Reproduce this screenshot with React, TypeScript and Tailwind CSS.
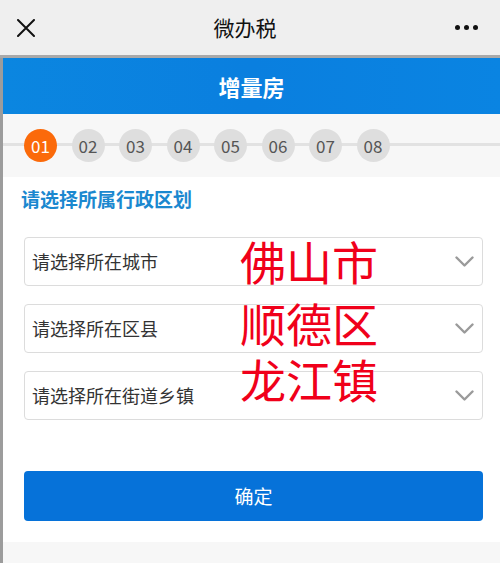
import React from 'react';

const steps = ['01', '02', '03', '04', '05', '06', '07', '08'];

const selects = ['请选择所在城市', '请选择所在区县', '请选择所在街道乡镇'];

const Chevron: React.FC = () => (
    <svg width="19" height="11" viewBox="0 0 19 11" fill="none">
        <path d="M1.5 1.5 L9.5 9.5 L17.5 1.5" stroke="#9a9a9a" strokeWidth="2.4" strokeLinecap="round" strokeLinejoin="round" />
    </svg>
);

export default function App() {
    return (
        <div
            className="w-[500px] h-[563px] overflow-hidden bg-[#f7f7f7] flex flex-col"
            style={{ fontFamily: '"Noto Sans CJK SC", "Noto Sans", sans-serif' }}
        >
            {/* Top bar */}
            <div className="h-[55px] shrink-0 bg-[#efefef] flex items-center justify-between pl-[17px] pr-[16px]">
                <svg width="18" height="18" viewBox="0 0 18 18">
                    <path d="M1 1 L17 17 M17 1 L1 17" stroke="#111" strokeWidth="2" strokeLinecap="round" />
                </svg>
                <span className="text-[21px] text-[#111] leading-none">微办税</span>
                <div className="flex items-center gap-[4px] pr-[6px]">
                    <span className="w-[5px] h-[5px] rounded-full bg-[#111]" />
                    <span className="w-[5px] h-[5px] rounded-full bg-[#111]" />
                    <span className="w-[5px] h-[5px] rounded-full bg-[#111]" />
                </div>
            </div>
            <div className="h-[3px] shrink-0 bg-[#a9a9a9]" />

            <div className="flex flex-1">
                <div className="w-[3px] shrink-0 bg-[#9c9c9c]" />
                <div className="flex-1 flex flex-col">
                    {/* Blue header */}
                    <div className="h-[56px] shrink-0 bg-gradient-to-r from-[#0b86e0] via-[#0a7fdf] to-[#0a84e2] flex items-center justify-center">
                        <span className="text-white text-[22px] font-bold leading-none">增量房</span>
                    </div>

                    {/* Steps */}
                    <div className="h-[63px] shrink-0 bg-[#f7f7f7] relative flex items-center pl-[21px] gap-[14.5px]">
                        <div className="absolute left-0 right-0 top-[29px] h-[3px] bg-[#e2e2e2]" />
                        {steps.map((s, i) => (
                            <div
                                key={s}
                                className={
                                    i === 0
                                        ? 'relative w-[33px] h-[33px] rounded-full bg-[#fb6a0a] text-white text-[17px] flex items-center justify-center'
                                        : 'relative w-[33px] h-[33px] rounded-full bg-[#dedede] text-[#555] text-[17px] flex items-center justify-center'
                                }
                            >
                                {s}
                            </div>
                        ))}
                    </div>

                    {/* Form */}
                    <div className="bg-white shrink-0 h-[365px] pt-[10px] pl-[21px] pr-[17px]">
                        <div className="-ml-[3px] text-[19px] font-bold text-[#1b88cf] leading-[24px]">请选择所属行政区划</div>
                        <div className="relative mt-[26px] flex flex-col gap-[18px]">
                            {selects.map((s) => (
                                <div
                                    key={s}
                                    className="h-[49px] border border-[#dcdcdc] rounded-[4px] flex items-center justify-between pl-[7px] pr-[8px]"
                                >
                                    <span className="text-[18px] text-[#333]">{s}</span>
                                    <Chevron />
                                </div>
                            ))}
                            <div className="absolute left-[216px] top-[0px] text-[46px] leading-[46px] h-[46px] text-[#f0001a]">佛山市</div>
                            <div className="absolute left-[216px] top-[62px] text-[46px] leading-[46px] h-[46px] text-[#f0001a]">顺德区</div>
                            <div className="absolute left-[216px] top-[118px] text-[46px] leading-[46px] h-[46px] text-[#f0001a]">龙江镇</div>
                        </div>
                        <button className="mt-[51px] w-full h-[50px] rounded-[4px] bg-[#0672d9] text-white text-[19px] flex items-center justify-center">
                            确定
                        </button>
                    </div>
                </div>
            </div>
        </div>
    );
}
